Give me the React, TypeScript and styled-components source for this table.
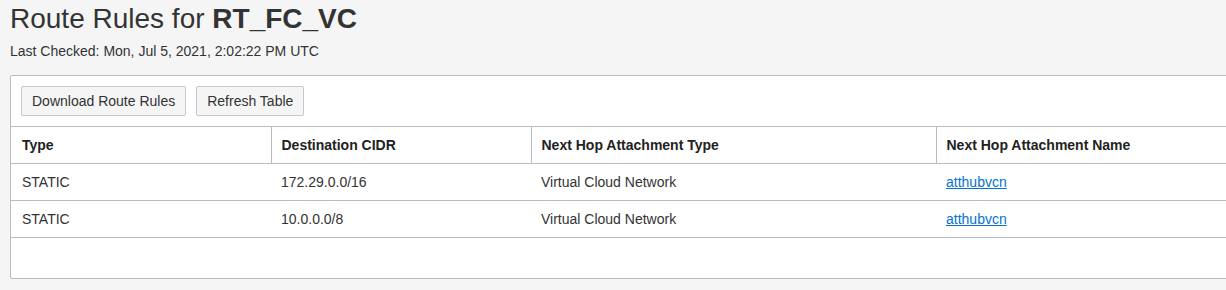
import React from "react";
import styled, { createGlobalStyle } from "styled-components";

const Global = createGlobalStyle`
  html, body {
    margin: 0;
    padding: 0;
    background: #f5f5f5;
    overflow: hidden;
    font-family: "Liberation Sans", Arial, sans-serif;
    color: #333333;
  }
`;

const Page = styled.div`
  padding: 3px 0 0 10px;
`;

const Title = styled.h1`
  margin: 0;
  font-size: 28px;
  line-height: 32px;
  font-weight: 400;
  color: #333333;
  b {
    font-weight: 700;
  }
`;

const Subtitle = styled.div`
  margin-top: 8px;
  font-size: 14px;
  line-height: 16px;
  color: #333333;
`;

const Panel = styled.div`
  margin-top: 16px;
  width: 1300px;
  background: #ffffff;
  border: 1px solid #b9bcc6;
  border-radius: 2px;
  padding-bottom: 40px;
`;

const Toolbar = styled.div`
  display: flex;
  gap: 10px;
  padding: 10px;
`;

const Button = styled.button`
  height: 30px;
  padding: 0 10px;
  background: #f5f5f5;
  border: 1px solid #c6c8cc;
  border-radius: 2px;
  font-family: "Liberation Sans", Arial, sans-serif;
  font-size: 14px;
  color: #333333;
  cursor: pointer;
`;

const Table = styled.table`
  width: 100%;
  border-collapse: collapse;
  table-layout: fixed;
  font-size: 14px;
`;

const Th = styled.th<{ $w?: number }>`
  box-sizing: border-box;
  width: ${(p) => (p.$w ? `${p.$w}px` : "auto")};
  height: 37px;
  padding: 0 10px;
  text-align: left;
  font-weight: 700;
  color: #222222;
  border-top: 1px solid #b9bcc6;
  border-bottom: 1px solid #b9bcc6;
  border-left: 1px solid #b9bcc6;
  &:first-child {
    border-left: none;
    padding-left: 11px;
  }
`;

const Td = styled.td`
  height: 36px;
  padding: 0 10px;
  color: #333333;
  border-bottom: 1px solid #b9bcc6;
  &:first-child {
    padding-left: 11px;
  }
`;

const Link = styled.a`
  color: #0572ce;
  text-decoration: underline;
`;

const rows = [
  { type: "STATIC", cidr: "172.29.0.0/16", hop: "Virtual Cloud Network", name: "atthubvcn" },
  { type: "STATIC", cidr: "10.0.0.0/8", hop: "Virtual Cloud Network", name: "atthubvcn" },
];

export default function App() {
  return (
    <>
      <Global />
      <Page>
        <Title>
          Route Rules for <b>RT_FC_VC</b>
        </Title>
        <Subtitle>Last Checked: Mon, Jul 5, 2021, 2:02:22 PM UTC</Subtitle>
        <Panel>
          <Toolbar>
            <Button>Download Route Rules</Button>
            <Button>Refresh Table</Button>
          </Toolbar>
          <Table>
            <thead>
              <tr>
                <Th $w={260}>Type</Th>
                <Th $w={260}>Destination CIDR</Th>
                <Th $w={405}>Next Hop Attachment Type</Th>
                <Th>Next Hop Attachment Name</Th>
              </tr>
            </thead>
            <tbody>
              {rows.map((r, i) => (
                <tr key={i}>
                  <Td>{r.type}</Td>
                  <Td>{r.cidr}</Td>
                  <Td>{r.hop}</Td>
                  <Td>
                    <Link href="#">{r.name}</Link>
                  </Td>
                </tr>
              ))}
            </tbody>
          </Table>
        </Panel>
      </Page>
    </>
  );
}
